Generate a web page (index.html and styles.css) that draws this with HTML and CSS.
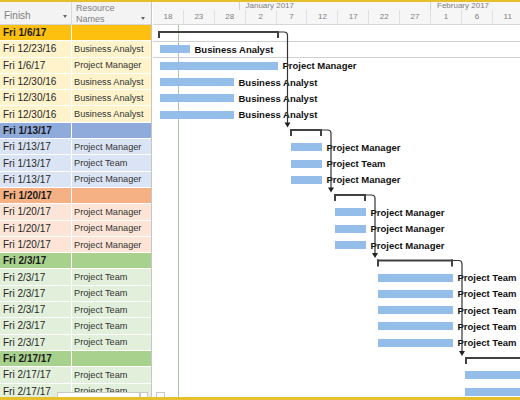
FILE: index.html
```html
<!DOCTYPE html>
<html>
<head>
<meta charset="utf-8">
<link rel="stylesheet" href="styles.css">
</head>
<body>
<div class="app">
  <div class="topbar"></div>
  <div class="main">
    <div class="grid">
      <div class="ghead">
        <div class="hcell h-finish">Finish<i class="dd"></i></div>
        <div class="hcell h-res">Resource<br>Names<i class="dd"></i></div>
      </div>
      <div class="grow sum gold"><div class="c-finish">Fri 1/6/17</div><div class="c-res"></div></div>
      <div class="grow gold"><div class="c-finish">Fri 12/23/16</div><div class="c-res">Business Analyst</div></div>
      <div class="grow gold"><div class="c-finish">Fri 1/6/17</div><div class="c-res">Project Manager</div></div>
      <div class="grow gold"><div class="c-finish">Fri 12/30/16</div><div class="c-res">Business Analyst</div></div>
      <div class="grow gold"><div class="c-finish">Fri 12/30/16</div><div class="c-res">Business Analyst</div></div>
      <div class="grow gold"><div class="c-finish">Fri 12/30/16</div><div class="c-res">Business Analyst</div></div>
      <div class="grow sum blue"><div class="c-finish">Fri 1/13/17</div><div class="c-res"></div></div>
      <div class="grow blue"><div class="c-finish">Fri 1/13/17</div><div class="c-res">Project Manager</div></div>
      <div class="grow blue"><div class="c-finish">Fri 1/13/17</div><div class="c-res">Project Team</div></div>
      <div class="grow blue"><div class="c-finish">Fri 1/13/17</div><div class="c-res">Project Manager</div></div>
      <div class="grow sum peach"><div class="c-finish">Fri 1/20/17</div><div class="c-res"></div></div>
      <div class="grow peach"><div class="c-finish">Fri 1/20/17</div><div class="c-res">Project Manager</div></div>
      <div class="grow peach"><div class="c-finish">Fri 1/20/17</div><div class="c-res">Project Manager</div></div>
      <div class="grow peach"><div class="c-finish">Fri 1/20/17</div><div class="c-res">Project Manager</div></div>
      <div class="grow sum green"><div class="c-finish">Fri 2/3/17</div><div class="c-res"></div></div>
      <div class="grow green"><div class="c-finish">Fri 2/3/17</div><div class="c-res">Project Team</div></div>
      <div class="grow green"><div class="c-finish">Fri 2/3/17</div><div class="c-res">Project Team</div></div>
      <div class="grow green"><div class="c-finish">Fri 2/3/17</div><div class="c-res">Project Team</div></div>
      <div class="grow green"><div class="c-finish">Fri 2/3/17</div><div class="c-res">Project Team</div></div>
      <div class="grow green"><div class="c-finish">Fri 2/3/17</div><div class="c-res">Project Team</div></div>
      <div class="grow sum green"><div class="c-finish">Fri 2/17/17</div><div class="c-res"></div></div>
      <div class="grow green"><div class="c-finish">Fri 2/17/17</div><div class="c-res">Project Team</div></div>
      <div class="grow green"><div class="c-finish">Fri 2/17/17</div><div class="c-res">Project Team</div></div>
    </div>
    <div class="split"></div>
    <div class="chart">
      <div class="tscale">
        <div class="tier top">
          <div class="month" style="width:86.5px"></div>
          <div class="month" style="width:191.5px">January 2017</div>
          <div class="month" style="width:120px">February 2017</div>
        </div>
        <div class="tier bottom">
          <div class="unit">18</div><div class="unit">23</div><div class="unit">28</div><div class="unit">2</div>
          <div class="unit">7</div><div class="unit">12</div><div class="unit">17</div><div class="unit">22</div>
          <div class="unit">27</div><div class="unit">1</div><div class="unit">6</div><div class="unit">11</div>
        </div>
      </div>
      <div class="cbody">
        <div class="statusline"></div>
        <div class="crow"></div>
        <div class="crow sel"><span class="bar" style="margin-left:7px;width:30px"></span><span class="lbl">Business Analyst</span></div>
        <div class="crow"><span class="bar" style="margin-left:7px;width:118px"></span><span class="lbl">Project Manager</span></div>
        <div class="crow"><span class="bar" style="margin-left:7px;width:74px"></span><span class="lbl">Business Analyst</span></div>
        <div class="crow"><span class="bar" style="margin-left:7px;width:74px"></span><span class="lbl">Business Analyst</span></div>
        <div class="crow"><span class="bar" style="margin-left:7px;width:74px"></span><span class="lbl">Business Analyst</span></div>
        <div class="crow"></div>
        <div class="crow"><span class="bar" style="margin-left:138px;width:31px"></span><span class="lbl">Project Manager</span></div>
        <div class="crow"><span class="bar" style="margin-left:138px;width:31px"></span><span class="lbl">Project Team</span></div>
        <div class="crow"><span class="bar" style="margin-left:138px;width:31px"></span><span class="lbl">Project Manager</span></div>
        <div class="crow"></div>
        <div class="crow"><span class="bar" style="margin-left:182px;width:31px"></span><span class="lbl">Project Manager</span></div>
        <div class="crow"><span class="bar" style="margin-left:182px;width:31px"></span><span class="lbl">Project Manager</span></div>
        <div class="crow"><span class="bar" style="margin-left:182px;width:31px"></span><span class="lbl">Project Manager</span></div>
        <div class="crow"></div>
        <div class="crow"><span class="bar" style="margin-left:225px;width:75px"></span><span class="lbl">Project Team</span></div>
        <div class="crow"><span class="bar" style="margin-left:225px;width:75px"></span><span class="lbl">Project Team</span></div>
        <div class="crow"><span class="bar" style="margin-left:225px;width:75px"></span><span class="lbl">Project Team</span></div>
        <div class="crow"><span class="bar" style="margin-left:225px;width:75px"></span><span class="lbl">Project Team</span></div>
        <div class="crow"><span class="bar" style="margin-left:225px;width:75px"></span><span class="lbl">Project Team</span></div>
        <div class="crow"></div>
        <div class="crow"><span class="bar" style="margin-left:312px;width:80px"></span></div>
        <div class="crow"><span class="bar" style="margin-left:312px;width:80px"></span></div>
      </div>
    </div>
  </div>
  <div class="bottombar"></div>

  <svg class="links" width="520" height="400" viewBox="0 0 520 400">
    <g class="brk">
      <rect x="158" y="31" width="121" height="2"/>
      <rect x="158" y="31" width="2" height="7"/>
      <rect x="277" y="31" width="2" height="7"/>
      <rect x="290" y="129" width="32" height="2"/>
      <rect x="290" y="129" width="2" height="7"/>
      <rect x="320" y="129" width="2" height="7"/>
      <rect x="334" y="194" width="32" height="2"/>
      <rect x="334" y="194" width="2" height="7"/>
      <rect x="364" y="194" width="2" height="7"/>
      <rect x="377" y="259.5" width="76" height="2"/>
      <rect x="377" y="259.5" width="2" height="7"/>
      <rect x="451" y="259.5" width="2" height="7"/>
      <rect x="465" y="357" width="70" height="2"/>
      <rect x="465" y="357" width="2" height="7"/>
    </g>
    <g class="conn">
      <path d="M279 32 H284 Q287.5 32 287.5 35.5 V123"/>
      <path d="M322 130 H327.5 Q331 130 331 133.5 V188"/>
      <path d="M366 195 H371.5 Q375 195 375 198.5 V253"/>
      <path d="M453 260.5 H458.5 Q462 260.5 462 264 V351"/>
    </g>
    <g class="arrow">
      <polygon points="284.5,122.5 290.5,122.5 287.5,127.5"/>
      <polygon points="328,187.5 334,187.5 331,192.5"/>
      <polygon points="372,253 378,253 375,258"/>
      <polygon points="459,351 465,351 462,356"/>
    </g>
  </svg>

  <div class="scroll">
    <div class="sb-thumb"></div>
    <div class="sb-btn b1"></div>
    <div class="sb-btn b2"></div>
  </div>
</div>
</body>
</html>
```

FILE: styles.css
```css
* { box-sizing: border-box; }
html, body { margin: 0; padding: 0; }
body {
  width: 520px;
  height: 400px;
  overflow: hidden;
  background: #ffffff;
  font-family: "Liberation Sans", Arial, sans-serif;
}
.app {
  position: relative;
  width: 520px;
  height: 400px;
  overflow: hidden;
  display: flex;
  flex-direction: column;
}
.topbar { height: 2px; background: #e5bf2c; flex: none; }
.bottombar { height: 3px; background: #e5bf2c; flex: none; }
.main { flex: 1; display: flex; min-height: 0; overflow: hidden; }

/* grid */
.grid { width: 151px; flex: none; display: flex; flex-direction: column; }
.ghead {
  height: 23px;
  flex: none;
  display: flex;
  background: #f3f3f3;
  border-bottom: 1px solid #d6d6d6;
}
.hcell { position: relative; color: #808080; white-space: nowrap; }
.h-finish {
  width: 72px;
  border-right: 1px solid #dadada;
  font-size: 10px;
  line-height: 12px;
  padding: 8px 0 0 4px;
}
.h-res {
  width: 79px;
  font-size: 9px;
  line-height: 11px;
  padding: 1px 0 0 4px;
}
.dd {
  position: absolute;
  width: 0;
  height: 0;
  border-left: 2.5px solid transparent;
  border-right: 2.5px solid transparent;
  border-top: 3px solid #666;
}
.h-finish .dd { left: 63px; top: 13px; }
.h-res .dd { left: 69px; top: 15px; }

.grow {
  height: 16.3px;
  flex: none;
  display: flex;
  align-items: stretch;
  border-bottom: 1px solid #ffffff;
  color: #262626;
  white-space: nowrap;
}
.grow .c-finish {
  width: 72px;
  border-right: 1px solid #ffffff;
  padding-left: 3px;
  font-size: 10px;
  display: flex;
  align-items: center;
  overflow: hidden;
}
.grow .c-res {
  width: 79px;
  padding-left: 2px;
  font-size: 9.2px;
  display: flex;
  align-items: center;
  overflow: hidden;
  color: #333;
}
.grow.sum .c-finish { font-weight: bold; color: #1a1a1a; }

.gold { background: #fff3cc; }
.gold.sum { background: #fdc00f; }
.blue { background: #dbe4f4; }
.blue.sum { background: #8fabdc; }
.peach { background: #fce5d6; }
.peach.sum { background: #f5b184; }
.green { background: #e2efda; }
.green.sum { background: #a9d18e; }

.split {
  width: 2px;
  flex: none;
  border-left: 1px solid #c6c6c6;
  background: #ffffff;
}

/* chart */
.chart {
  flex: 1;
  min-width: 0;
  display: flex;
  flex-direction: column;
  overflow: hidden;
}
.tscale {
  height: 23px;
  flex: none;
  background: #f6f6f6;
  border-bottom: 1px solid #d6d6d6;
  color: #808080;
}
.tier { display: flex; white-space: nowrap; }
.tier.top { height: 8px; font-size: 8px; line-height: 8px; }
.month { flex: none; border-right: 1px solid #d2d2d2; padding-left: 6px; overflow: hidden; }
.tier.bottom { height: 14px; font-size: 8px; line-height: 14px; }
.unit {
  flex: none;
  width: 30.9px;
  text-align: center;
  border-right: 1px solid #e0e0e0;
}

.cbody { flex: 1; position: relative; }
.statusline {
  position: absolute;
  left: 25px;
  top: 0;
  bottom: 0;
  width: 1px;
  background: #a6c8a6;
}
.crow {
  position: relative;
  height: 16.3px;
  display: flex;
  align-items: center;
  white-space: nowrap;
}
.crow.sel { box-shadow: inset 0 1px 0 #cfcfcf, inset 0 -1px 0 #cfcfcf; }
.bar { flex: none; height: 8px; background: #94bde9; }
.lbl {
  margin-left: 4.5px;
  font-weight: bold;
  font-size: 9.5px;
  color: #111;
}

/* overlay connectors */
.links { position: absolute; left: 0; top: 0; pointer-events: none; }
.brk rect { fill: #404040; }
.conn path { fill: none; stroke: #333; stroke-width: 1.2; }
.arrow polygon { fill: #222; }

.scroll { position: absolute; left: 0; bottom: 3px; width: 520px; height: 5px; }
.sb-thumb, .sb-btn {
  position: absolute;
  top: 0;
  height: 5px;
  background: #ffffff;
  border: 1px solid #c8c8c8;
  border-bottom: none;
}
.sb-thumb { left: 57px; width: 83px; }
.sb-btn.b1 { left: 140px; width: 8px; }
.sb-btn.b2 { left: 156px; width: 9px; }
```
